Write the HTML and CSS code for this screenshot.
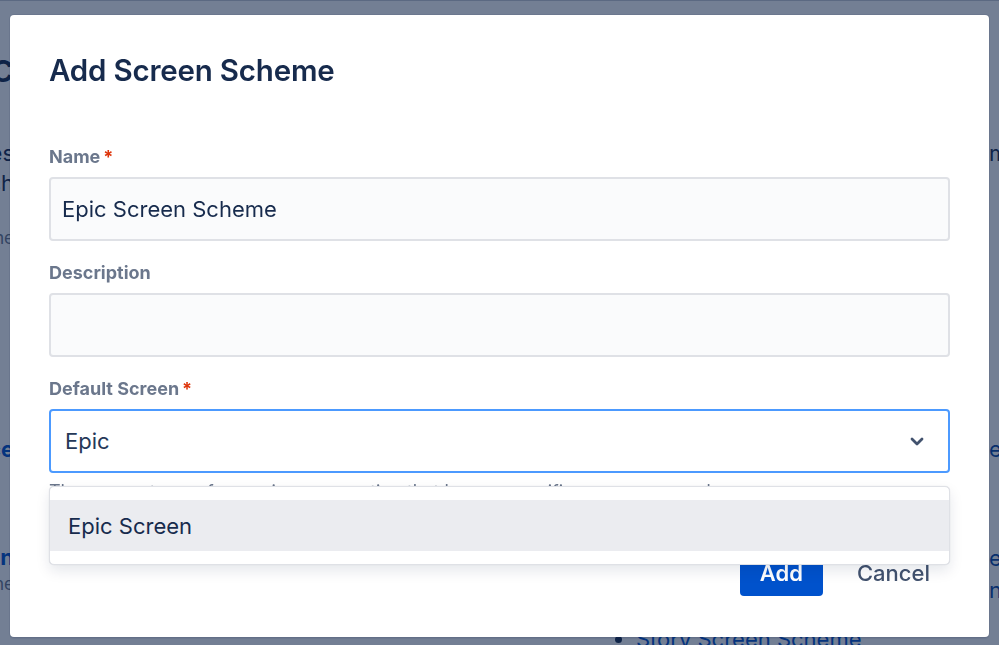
FILE: index.html
```html
<!DOCTYPE html>
<html lang="en">
<head>
<meta charset="utf-8">
<title>Add Screen Scheme</title>
<link rel="stylesheet" href="styles.css">
</head>
<body>
<div class="page">
  <div class="topbar"></div>
  <div class="bg-row row-title">
    <div class="bg-left"><span class="bg-h1">Epic</span></div>
    <div class="bg-right"></div>
  </div>
  <div class="bg-row row-para">
    <div class="bg-left bg-text">
      <span>Screen schemes</span>
      <span>each</span>
    </div>
    <div class="bg-right bg-text"><span>mapping</span></div>
  </div>
  <div class="bg-row row-small">
    <div class="bg-left bg-muted"><span>scheme</span></div>
    <div class="bg-right"></div>
  </div>
  <div class="bg-rule rule-a"></div>
  <div class="bg-rule rule-b"></div>
  <div class="bg-rule rule-c"></div>
  <div class="bg-row row-link">
    <div class="bg-left bg-link"><span>Space</span></div>
    <div class="bg-right bg-link2"><span>e</span></div>
  </div>
  <div class="bg-row row-link2">
    <div class="bg-left">
      <span class="bg-link">Screen</span>
      <span class="bg-muted">the</span>
    </div>
    <div class="bg-right bg-link2"><span>e</span><span>n</span></div>
  </div>
  <ul class="bg-list">
    <li>Story Screen Scheme</li>
  </ul>
</div>

<div class="blanket"></div>

<div class="dialog" role="dialog" aria-labelledby="dlg-title">
  <h2 class="dialog-title" id="dlg-title">Add Screen Scheme</h2>
  <form class="form">
    <div class="field">
      <label class="label">Name<span class="req">*</span></label>
      <div class="textfield">Epic Screen Scheme</div>
    </div>
    <div class="field">
      <label class="label">Description</label>
      <div class="textfield"></div>
    </div>
    <div class="field">
      <label class="label">Default Screen<span class="req">*</span></label>
      <div class="select-wrap">
        <div class="select">
          <span class="select-value">Epic</span>
          <svg class="chevron" width="14" height="10" viewBox="0 0 14 10" aria-hidden="true">
            <path d="M2 2 L7 7 L12 2" fill="none" stroke="#42526E" stroke-width="2.8" stroke-linecap="round" stroke-linejoin="round"/>
          </svg>
        </div>
        <div class="menu">
          <div class="option is-focused">Epic Screen</div>
        </div>
      </div>
      <div class="helper">The screen to use for any issue operation that has no specific screen mapped.</div>
    </div>
    <div class="actions">
      <button type="button" class="btn btn-primary">Add</button>
      <button type="button" class="btn btn-subtle">Cancel</button>
    </div>
  </form>
</div>
</body>
</html>
```

FILE: styles.css
```css
* { box-sizing: border-box; }

html, body {
  margin: 0;
  padding: 0;
  height: 100%;
  overflow: hidden;
}

body {
  font-family: Inter, "Noto Sans", "Liberation Sans", sans-serif;
  color: #172B4D;
  background: #ffffff;
}

/* ---------- background page (dimmed) ---------- */
.page {
  width: 999px;
  height: 645px;
  display: flex;
  flex-direction: column;
}

.topbar {
  height: 9px;
  border-bottom: 1px solid #c8ccd6;
  background: #f4f5f7;
}

.bg-row {
  display: flex;
  justify-content: space-between;
}

.bg-left {
  width: 14px;
  overflow: hidden;
  display: flex;
  flex-direction: column;
  align-items: flex-end;
  white-space: nowrap;
}

.bg-right {
  width: 30px;
  overflow: hidden;
  display: flex;
  flex-direction: column;
  align-items: flex-start;
  white-space: nowrap;
  padding-left: 20px;
}

.bg-h1 {
  font-size: 40px;
  font-weight: 500;
  color: #172B4D;
  line-height: 40px;
}

.row-title { margin-top: 47px; height: 44px; }

.bg-text { font-size: 22px; line-height: 30px; color: #172B4D; }
.row-para { margin-top: 50px; }

.bg-muted { font-size: 17px; line-height: 24px; color: #6B778C; }
.row-small { margin-top: 28px; }

.bg-rule {
  height: 1px;
  background: #c1c7d0;
}
.rule-a { margin-top: 34px; width: 30px; }
.rule-b { margin-top: 49px; width: 30px; }
.rule-c { margin-top: 67px; }

.bg-link { font-size: 22px; line-height: 30px; font-weight: 700; color: #0052CC; }
.bg-link2 { font-size: 22px; line-height: 30px; color: #0747A6; }
.row-link { margin-top: 34px; }

.row-link2 { margin-top: 78px; }
.row-link2 .bg-right span { line-height: 32px; }

.bg-list {
  margin: 18px 0 0 0;
  padding-left: 636px;
  font-size: 22px;
  line-height: 30px;
  color: #0052CC;
}
.bg-list li::marker { color: #172B4D; }

/* ---------- blanket ---------- */
.blanket {
  position: fixed;
  inset: 0;
  background: rgba(9, 30, 66, 0.57);
}

/* ---------- dialog ---------- */
.dialog {
  position: fixed;
  left: 10px;
  top: 15px;
  width: 979px;
  height: 622px;
  background: #ffffff;
  border-radius: 4px;
  box-shadow: 0 0 0 1px rgba(9, 30, 66, 0.08), 0 2px 1px rgba(9, 30, 66, 0.08);
  padding: 35px 39px 40px 39px;
  display: flex;
  flex-direction: column;
}

.dialog-title {
  margin: 0;
  font-size: 29.5px;
  line-height: 40px;
  font-weight: 600;
  color: #172B4D;
  letter-spacing: -0.2px;
}

.form {
  margin-top: 55px;
  display: flex;
  flex-direction: column;
}

.field {
  display: flex;
  flex-direction: column;
}
.field + .field { margin-top: 20px; }

.label {
  font-size: 18px;
  line-height: 24px;
  font-weight: 700;
  color: #6B778C;
  margin-bottom: 8px;
}

.req {
  color: #DE350B;
  margin-left: 3px;
}

.textfield {
  height: 64px;
  border: 2px solid #DFE1E6;
  border-radius: 4px;
  background: #FAFBFC;
  padding: 0 11px;
  display: flex;
  align-items: center;
  font-size: 22px;
  color: #172B4D;
}

.select-wrap {
  position: relative;
}

.select {
  height: 64px;
  border: 2px solid #4C9AFF;
  border-radius: 4px;
  background: #ffffff;
  padding: 0 24px 0 14px;
  display: flex;
  align-items: center;
  justify-content: space-between;
}

.select-value {
  font-size: 22px;
  color: #253858;
}

.chevron { display: block; margin-top: 1px; }

.helper {
  margin-top: 8px;
  font-size: 18px;
  line-height: 22px;
  color: #6B778C;
  white-space: nowrap;
}

.menu {
  position: absolute;
  left: 0;
  right: 0;
  top: calc(100% + 13px);
  background: #ffffff;
  border: 1px solid #DFE1E6;
  border-radius: 5px;
  padding: 13px 0 13px 0;
  box-shadow: 0 6px 14px rgba(9, 30, 66, 0.10), 0 0 1px rgba(9, 30, 66, 0.2);
  z-index: 2;
}

.option {
  height: 51px;
  padding: 0 18px;
  display: flex;
  align-items: center;
  font-size: 22px;
  color: #172B4D;
}
.option.is-focused { background: #EBECF0; }

.actions {
  margin-top: 46px;
  display: flex;
  justify-content: flex-end;
  gap: 14px;
}

.btn {
  height: 47px;
  border: none;
  border-radius: 4px;
  padding: 0 20px;
  font-family: inherit;
  font-size: 22px;
  font-weight: 600;
  cursor: pointer;
}

.btn-primary {
  background: #0052CC;
  color: #ffffff;
}

.btn-subtle {
  background: transparent;
  color: #42526E;
  font-weight: 500;
}
```
